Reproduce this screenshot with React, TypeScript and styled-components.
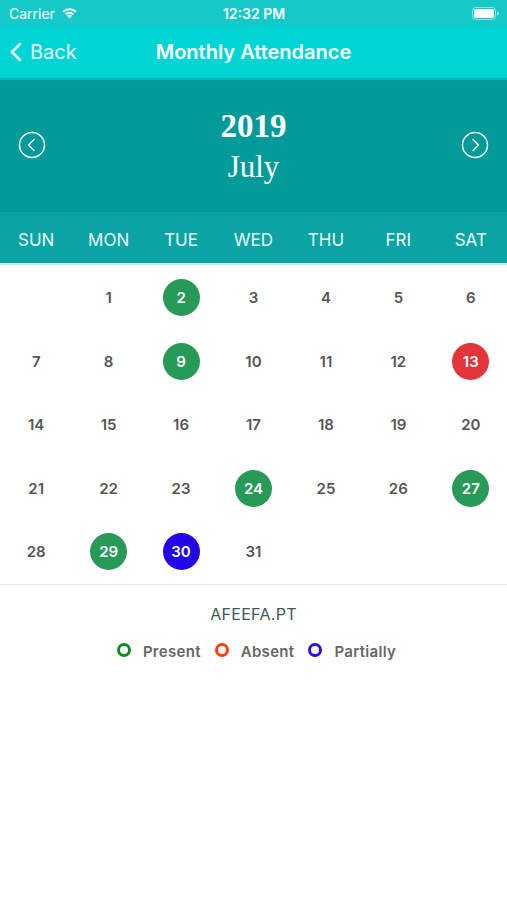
import React from "react";
import styled, { createGlobalStyle } from "styled-components";

const Global = createGlobalStyle`
  html, body { margin: 0; padding: 0; background: #fff; }
  body { font-family: Inter, Roboto, "Liberation Sans", sans-serif; }
`;

const Page = styled.div`
  width: 507px;
  min-height: 900px;
  background: #fff;
  display: flex;
  flex-direction: column;
`;

const StatusBar = styled.div`
  height: 26px;
  background: #15c9c9;
  color: #fff;
  display: grid;
  grid-template-columns: 1fr auto 1fr;
  align-items: center;
  padding: 0 8px 0 9px;
  font-size: 14px;
  font-weight: 500;
`;

const StatusLeft = styled.div`
  display: flex;
  align-items: center;
  gap: 6px;
  font-size: 14px;
  font-weight: 400;
`;

const StatusTime = styled.div`
  font-weight: 600;
  font-size: 14px;
`;

const StatusRight = styled.div`
  display: flex;
  justify-content: flex-end;
  align-items: center;
`;

const NavBar = styled.div`
  height: 52px;
  background: #00d4d4;
  border-bottom: 2px solid #0bb8b8;
  display: grid;
  grid-template-columns: 1fr auto 1fr;
  align-items: center;
  padding: 0 10px;
  color: #fff;
`;

const BackButton = styled.div`
  display: flex;
  align-items: center;
  gap: 8px;
  font-size: 20px;
  color: #e8ffff;
`;

const NavTitle = styled.div`
  font-size: 20px;
  font-weight: 600;
  color: #fff;
  text-align: center;
`;

const MonthHeader = styled.div`
  height: 132px;
  background: #039a9a;
  display: grid;
  grid-template-columns: 64px 1fr 64px;
  align-items: center;
  color: #fff;
`;

const ArrowCell = styled.div`
  display: flex;
  justify-content: center;
  align-items: center;
  padding-bottom: 2px;
`;

const MonthTitle = styled.div`
  display: flex;
  flex-direction: column;
  align-items: center;
  font-family: "Liberation Serif", "DejaVu Serif", serif;
  line-height: 1;
`;

const Year = styled.div`
  font-size: 33px;
  font-weight: 700;
`;

const Month = styled.div`
  font-size: 31px;
  margin-top: 8px;
`;

const WeekRow = styled.div`
  height: 51px;
  background: #0ba3a3;
  border-bottom: 2px solid #b7f0f0;
  display: grid;
  grid-template-columns: repeat(7, 1fr);
  align-items: center;
`;

const WeekDay = styled.div`
  text-align: center;
  color: #eafcfc;
  font-size: 17px;
  font-weight: 400;
  padding-top: 5px;
`;

const Grid = styled.div`
  display: grid;
  grid-template-columns: repeat(7, 1fr);
  grid-template-rows: repeat(5, 63.5px);
  padding-top: 1px;
  border-bottom: 1px solid #e2e6e6;
`;

const Cell = styled.div`
  display: flex;
  align-items: center;
  justify-content: center;
`;

const Day = styled.div<{ $bg?: string }>`
  width: 37px;
  height: 37px;
  border-radius: 50%;
  display: flex;
  align-items: center;
  justify-content: center;
  font-size: 15px;
  font-weight: 600;
  color: ${(p) => (p.$bg ? "#fff" : "#555")};
  background: ${(p) => p.$bg || "transparent"};
`;

const Footer = styled.div`
  display: flex;
  flex-direction: column;
  align-items: center;
  padding-top: 19px;
  gap: 18px;
`;

const Name = styled.div`
  font-size: 16px;
  color: #3e5858;
  letter-spacing: 0.3px;
`;

const Legend = styled.div`
  display: flex;
  align-items: center;
  gap: 14px;
  padding-left: 6px;
`;

const LegendItem = styled.div`
  display: flex;
  align-items: center;
  gap: 12px;
  font-size: 15px;
  font-weight: 600;
  letter-spacing: 0.3px;
  color: #666;
`;

const Ring = styled.span<{ $c: string }>`
  width: 8px;
  height: 8px;
  border-radius: 50%;
  border: 3px solid ${(p) => p.$c};
  display: inline-block;
  margin-bottom: 3px;
`;

const GREEN = "#289a58";
const RED = "#e3343a";
const BLUE = "#2306e6";

const marks: Record<number, string> = {
  2: GREEN,
  9: GREEN,
  13: RED,
  24: GREEN,
  27: GREEN,
  29: GREEN,
  30: BLUE,
};

const Circle = ({ dir }: { dir: "l" | "r" }) => (
  <svg width="28" height="28" viewBox="0 0 28 28" fill="none" stroke="#fff" strokeWidth="1.4">
    <circle cx="14" cy="14" r="12.5" />
    {dir === "l" ? (
      <path d="M16 8.5 L10.5 14 L16 19.5" strokeLinecap="round" strokeLinejoin="round" />
    ) : (
      <path d="M12 8.5 L17.5 14 L12 19.5" strokeLinecap="round" strokeLinejoin="round" />
    )}
  </svg>
);

export default function App() {
  const days: (number | null)[] = [null, ...Array.from({ length: 31 }, (_, i) => i + 1)];
  return (
    <Page>
      <Global />
      <StatusBar>
        <StatusLeft>
          Carrier
          <svg width="17" height="12" viewBox="0 0 17 12" fill="#fff">
            <path d="M8.5 11.5 L6 8.8 A3.6 3.6 0 0 1 11 8.8 Z" />
            <path d="M3.9 6.6 A6.6 6.6 0 0 1 13.1 6.6 L11.8 8 A4.8 4.8 0 0 0 5.2 8 Z" />
            <path d="M1.4 4.1 A10.2 10.2 0 0 1 15.6 4.1 L14.3 5.5 A8.3 8.3 0 0 0 2.7 5.5 Z" />
          </svg>
        </StatusLeft>
        <StatusTime>12:32 PM</StatusTime>
        <StatusRight>
          <svg width="27" height="13" viewBox="0 0 27 13">
            <rect x="0.5" y="0.5" width="23" height="12" rx="3" fill="none" stroke="#fff" strokeOpacity="0.5" />
            <rect x="2" y="2" width="20" height="9" rx="1.6" fill="#fff" />
            <path d="M25 4.5 v4 a2 2 0 0 0 0 -4z" fill="#fff" fillOpacity="0.5" />
          </svg>
        </StatusRight>
      </StatusBar>
      <NavBar>
        <BackButton>
          <svg width="12" height="20" viewBox="0 0 12 20" fill="none" stroke="#e8ffff" strokeWidth="2.6" strokeLinecap="round" strokeLinejoin="round">
            <path d="M10 2 L2 10 L10 18" />
          </svg>
          Back
        </BackButton>
        <NavTitle>Monthly Attendance</NavTitle>
        <div />
      </NavBar>
      <MonthHeader>
        <ArrowCell>
          <Circle dir="l" />
        </ArrowCell>
        <MonthTitle>
          <Year>2019</Year>
          <Month>July</Month>
        </MonthTitle>
        <ArrowCell>
          <Circle dir="r" />
        </ArrowCell>
      </MonthHeader>
      <WeekRow>
        {["SUN", "MON", "TUE", "WED", "THU", "FRI", "SAT"].map((d) => (
          <WeekDay key={d}>{d}</WeekDay>
        ))}
      </WeekRow>
      <Grid>
        {days.map((d, i) => (
          <Cell key={i}>{d && <Day $bg={marks[d]}>{d}</Day>}</Cell>
        ))}
      </Grid>
      <Footer>
        <Name>AFEEFA.PT</Name>
        <Legend>
          <LegendItem>
            <Ring $c="#138a20" />
            Present
          </LegendItem>
          <LegendItem>
            <Ring $c="#f3410f" />
            Absent
          </LegendItem>
          <LegendItem>
            <Ring $c="#2a10e0" />
            Partially
          </LegendItem>
        </Legend>
      </Footer>
    </Page>
  );
}
